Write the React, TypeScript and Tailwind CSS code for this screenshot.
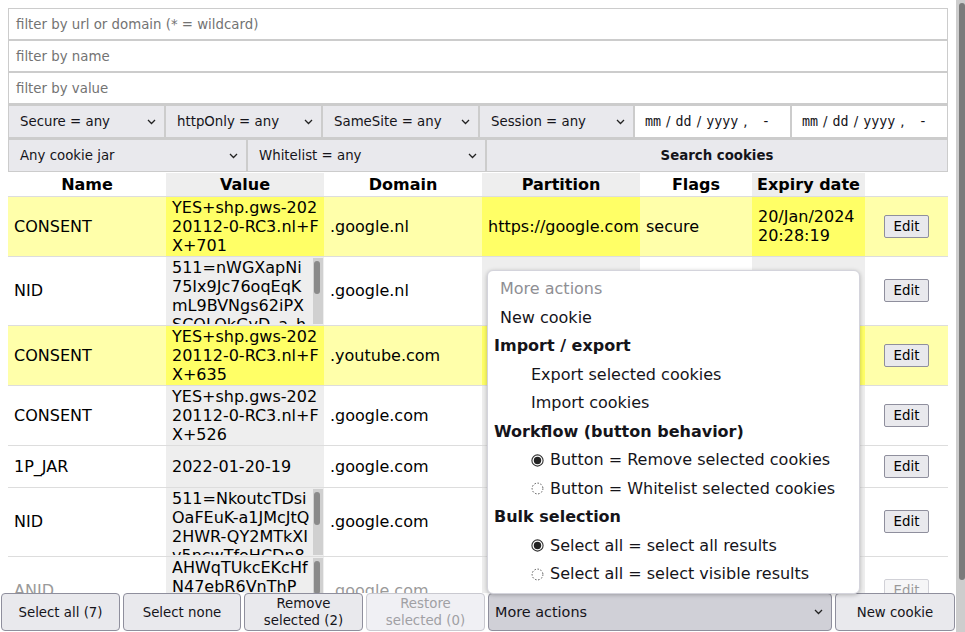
import React from 'react';

type Row = {
  name: string;
  value: string[];
  domain: string;
  partition?: string;
  flags?: string;
  expiry?: string[];
  hl?: boolean;
  scroll?: boolean;
  faded?: boolean;
};

const rows: Row[] = [
  {
    name: 'CONSENT',
    value: ['YES+shp.gws-202', '20112-0-RC3.nl+F', 'X+701'],
    domain: '.google.nl',
    partition: 'https://google.com',
    flags: 'secure',
    expiry: ['20/Jan/2024', '20:28:19'],
    hl: true,
  },
  {
    name: 'NID',
    value: ['511=nWGXapNi', '75Ix9Jc76oqEqK', 'mL9BVNgs62iPX', 'SCOLOkGvD_a_h', 'Qz3Rt8WkPa0cLm'],
    domain: '.google.nl',
    scroll: true,
  },
  {
    name: 'CONSENT',
    value: ['YES+shp.gws-202', '20112-0-RC3.nl+F', 'X+635'],
    domain: '.youtube.com',
    hl: true,
  },
  {
    name: 'CONSENT',
    value: ['YES+shp.gws-202', '20112-0-RC3.nl+F', 'X+526'],
    domain: '.google.com',
  },
  { name: '1P_JAR', value: ['2022-01-20-19'], domain: '.google.com' },
  {
    name: 'NID',
    value: ['511=NkoutcTDsi', 'OaFEuK-a1JMcJtQ', '2HWR-QY2MTkXI', 'v5ncwTfoHCDn8', 'Lk4sVb2xWq9'],
    domain: '.google.com',
    scroll: true,
  },
  {
    name: 'ANID',
    value: ['AHWqTUkcEKcHf', 'N47ebR6VnThP', 'aQ3xLmZ0pWk', 'Ty8Rb2vNc'],
    domain: '.google.com',
    scroll: true,
    faded: true,
  },
];

const Chevron = () => (
  <svg width="9" height="6" viewBox="0 0 9 6" className="shrink-0">
    <path d="M1 1l3.5 3.5L8 1" fill="none" stroke="#222" strokeWidth="1.3" />
  </svg>
);

function FakeSelect({ label, className }: { label: string; className: string }) {
  return (
    <div
      className={`flex shrink-0 items-center justify-between bg-[#e9e9ed] pl-[11px] pr-[8px] text-[13.33px] text-[#15141a] ${className}`}
    >
      <span>{label}</span>
      <Chevron />
    </div>
  );
}

function DateInput({ className }: { className: string }) {
  return (
    <div className={`flex items-center bg-white pl-[10px] text-[13.33px] text-[#15141a] ${className}`}>
      <span className="font-['DejaVu_Sans_Mono',monospace]">mm</span>
      <span className="mx-[5px]">/</span>
      <span className="font-['DejaVu_Sans_Mono',monospace]">dd</span>
      <span className="mx-[5px]">/</span>
      <span className="font-['DejaVu_Sans_Mono',monospace]">yyyy</span>
      <span className="ml-[5px]">,</span>
      <span className="ml-[16px]">-</span>
    </div>
  );
}

function Radio({ on }: { on: boolean }) {
  return (
    <svg width="13" height="13" viewBox="0 0 13 13" className="mr-[6px] shrink-0">
      {on ? (
        <>
          <circle cx="6.5" cy="6.5" r="5.6" fill="none" stroke="#333" strokeWidth="1.1" />
          <circle cx="6.5" cy="6.5" r="3.7" fill="#222" />
        </>
      ) : (
        <circle cx="6.5" cy="6.5" r="5.4" fill="none" stroke="#555" strokeWidth="1" strokeDasharray="1.5 1.6" />
      )}
    </svg>
  );
}

function ValueBox({ lines }: { lines: string[] }) {
  return (
    <div className="flex h-[66px]">
      <div className="flex-1 overflow-hidden">
        {lines.map((l, i) => (
          <div key={i}>{l}</div>
        ))}
      </div>
      <div className="w-[10px] bg-[#d0d0d0] pt-[3px] pl-[1px]">
        <div className="h-[33px] w-[6px] rounded-full bg-[#8a8a8a]" />
      </div>
    </div>
  );
}

export default function App() {
  const td = 'px-[6px] py-[1px] align-middle';
  return (
    <div className="relative flex h-[632px] w-[965px] overflow-hidden bg-white font-['DejaVu_Sans',sans-serif] text-black">
      <div className="flex w-[956px] flex-col">
        <div className="h-[593px] overflow-hidden px-[8px] pt-[8px]">
          <div className="flex h-[32px] items-center border border-[#ccc] pl-[7px] pt-[1px] text-[13.33px] text-[#737373]">
            filter by url or domain (* = wildcard)
          </div>
          <div className="flex h-[32px] items-center border border-[#ccc] pl-[7px] pt-[1px] text-[13.33px] text-[#737373]">
            filter by name
          </div>
          <div className="flex h-[32px] items-center border border-[#ccc] pl-[7px] pt-[1px] text-[13.33px] text-[#737373]">
            filter by value
          </div>

          <div className="flex h-[34px] gap-[2px] border border-[#ccc] bg-[#ccc] pt-[1px]">
            <FakeSelect label="Secure = any" className="w-[155px]" />
            <FakeSelect label="httpOnly = any" className="w-[155px]" />
            <FakeSelect label="SameSite = any" className="w-[155px]" />
            <FakeSelect label="Session = any" className="w-[153px]" />
            <DateInput className="w-[155px] shrink-0" />
            <DateInput className="flex-1" />
          </div>
          <div className="flex h-[34px] gap-[2px] border border-[#ccc] bg-[#ccc] pt-[1px]">
            <FakeSelect label="Any cookie jar" className="w-[237px]" />
            <FakeSelect label="Whitelist = any" className="w-[237px]" />
            <div className="flex flex-1 items-center justify-center bg-[#e9e9ed] text-[13.33px] font-bold text-[#15141a]">
              Search cookies
            </div>
          </div>

          <table className="mt-[1px] w-full table-fixed border-collapse text-[16px] leading-[19px]">
            <colgroup>
              <col className="w-[158px]" />
              <col className="w-[158px]" />
              <col className="w-[158px]" />
              <col className="w-[158px]" />
              <col className="w-[112px]" />
              <col className="w-[113px]" />
              <col className="w-[83px]" />
            </colgroup>
            <thead>
              <tr className="h-[23px] border-b border-[#ddd]">
                <th className="font-bold">Name</th>
                <th className="bg-[#eee] font-bold">Value</th>
                <th className="font-bold">Domain</th>
                <th className="bg-[#eee] font-bold">Partition</th>
                <th className="font-bold">Flags</th>
                <th className="bg-[#eee] font-bold">Expiry date</th>
                <th></th>
              </tr>
            </thead>
            <tbody>
              {rows.map((r, i) => {
                const light = r.hl ? 'bg-[#ffffaa]' : 'bg-white';
                const dark = r.hl ? 'bg-[#ffff66]' : 'bg-[#eee]';
                const fade = r.faded ? 'text-[#9a9a9a]' : '';
                return (
                  <tr key={i} className="border-b border-[#ddd]">
                    <td className={`${td} ${light} ${fade}`}>{r.name}</td>
                    <td className={`${dark} py-[1px] pl-[6px] pr-[1px] align-middle`}>
                      {r.scroll ? (
                        <ValueBox lines={r.value} />
                      ) : (
                        r.value.map((l, j) => <div key={j}>{l}</div>)
                      )}
                    </td>
                    <td className={`${td} ${light} ${fade}`}>{r.domain}</td>
                    <td className={`${td} ${dark}`}>{r.partition}</td>
                    <td className={`${td} ${light}`}>{r.flags}</td>
                    <td className={`${td} ${dark}`}>
                      {r.expiry?.map((l, j) => (
                        <div key={j}>{l}</div>
                      ))}
                    </td>
                    <td className={`${td} ${light} text-center`}>
                      <button
                        className={`my-[8px] h-[23px] w-[45px] rounded-[2px] border border-[#8f8f9d] bg-[#e9e9ed] text-[13.33px] ${
                          r.faded ? 'opacity-40' : ''
                        }`}
                      >
                        Edit
                      </button>
                    </td>
                  </tr>
                );
              })}
            </tbody>
          </table>
        </div>

        <div className="flex h-[39px] gap-[3px] bg-white pl-[1px] pr-[1px] text-[13.33px] leading-[17px] text-[#15141a]">
          <button className="h-[38px] w-[119px] rounded-[4px] border border-[#8f8f9d] bg-[#e9e9ed]">
            Select all (7)
          </button>
          <button className="h-[38px] w-[118px] rounded-[4px] border border-[#8f8f9d] bg-[#e9e9ed]">
            Select none
          </button>
          <button className="h-[38px] w-[119px] rounded-[4px] border border-[#8f8f9d] bg-[#e9e9ed]">
            Remove
            <br />
            selected (2)
          </button>
          <button className="h-[38px] w-[119px] rounded-[4px] border border-[#c9c9d0] bg-[#f0f0f4] text-[#a0a0a4]">
            Restore
            <br />
            selected (0)
          </button>
          <div className="flex h-[38px] flex-1 items-center justify-between rounded-[4px] border border-[#8f8f9d] bg-[#d0d0d7] pl-[6px] pr-[8px] text-[14.4px]">
            <span>More actions</span>
            <Chevron />
          </div>
          <button className="h-[38px] w-[120px] rounded-[4px] border border-[#8f8f9d] bg-[#e9e9ed]">
            New cookie
          </button>
        </div>
      </div>

      <div className="flex w-[9px] justify-end bg-[#cdcdcd] pt-[3px]">
        <div className="h-[577px] w-[6px] rounded-full bg-[#7b7b7b]" />
      </div>

      <div className="absolute left-[487px] top-[270px] w-[373px] rounded-[6px] border border-[#d4d4dc] bg-white py-[4px] text-[16px] text-[#15141a] shadow-[0_1px_4px_rgba(0,0,0,0.25)]">
        <div className="flex h-[28.5px] items-center pl-[12px] text-[#8f8f94]">More actions</div>
        <div className="flex h-[28.5px] items-center pl-[12px]">New cookie</div>
        <div className="flex h-[28.5px] items-center pl-[6px] font-bold">Import / export</div>
        <div className="flex h-[28.5px] items-center pl-[43px]">Export selected cookies</div>
        <div className="flex h-[28.5px] items-center pl-[43px]">Import cookies</div>
        <div className="flex h-[28.5px] items-center pl-[6px] font-bold">Workflow (button behavior)</div>
        <div className="flex h-[28.5px] items-center pl-[43px]">
          <Radio on />
          Button = Remove selected cookies
        </div>
        <div className="flex h-[28.5px] items-center pl-[43px]">
          <Radio on={false} />
          Button = Whitelist selected cookies
        </div>
        <div className="flex h-[28.5px] items-center pl-[6px] font-bold">Bulk selection</div>
        <div className="flex h-[28.5px] items-center pl-[43px]">
          <Radio on />
          Select all = select all results
        </div>
        <div className="flex h-[28.5px] items-center pl-[43px]">
          <Radio on={false} />
          Select all = select visible results
        </div>
      </div>
    </div>
  );
}
